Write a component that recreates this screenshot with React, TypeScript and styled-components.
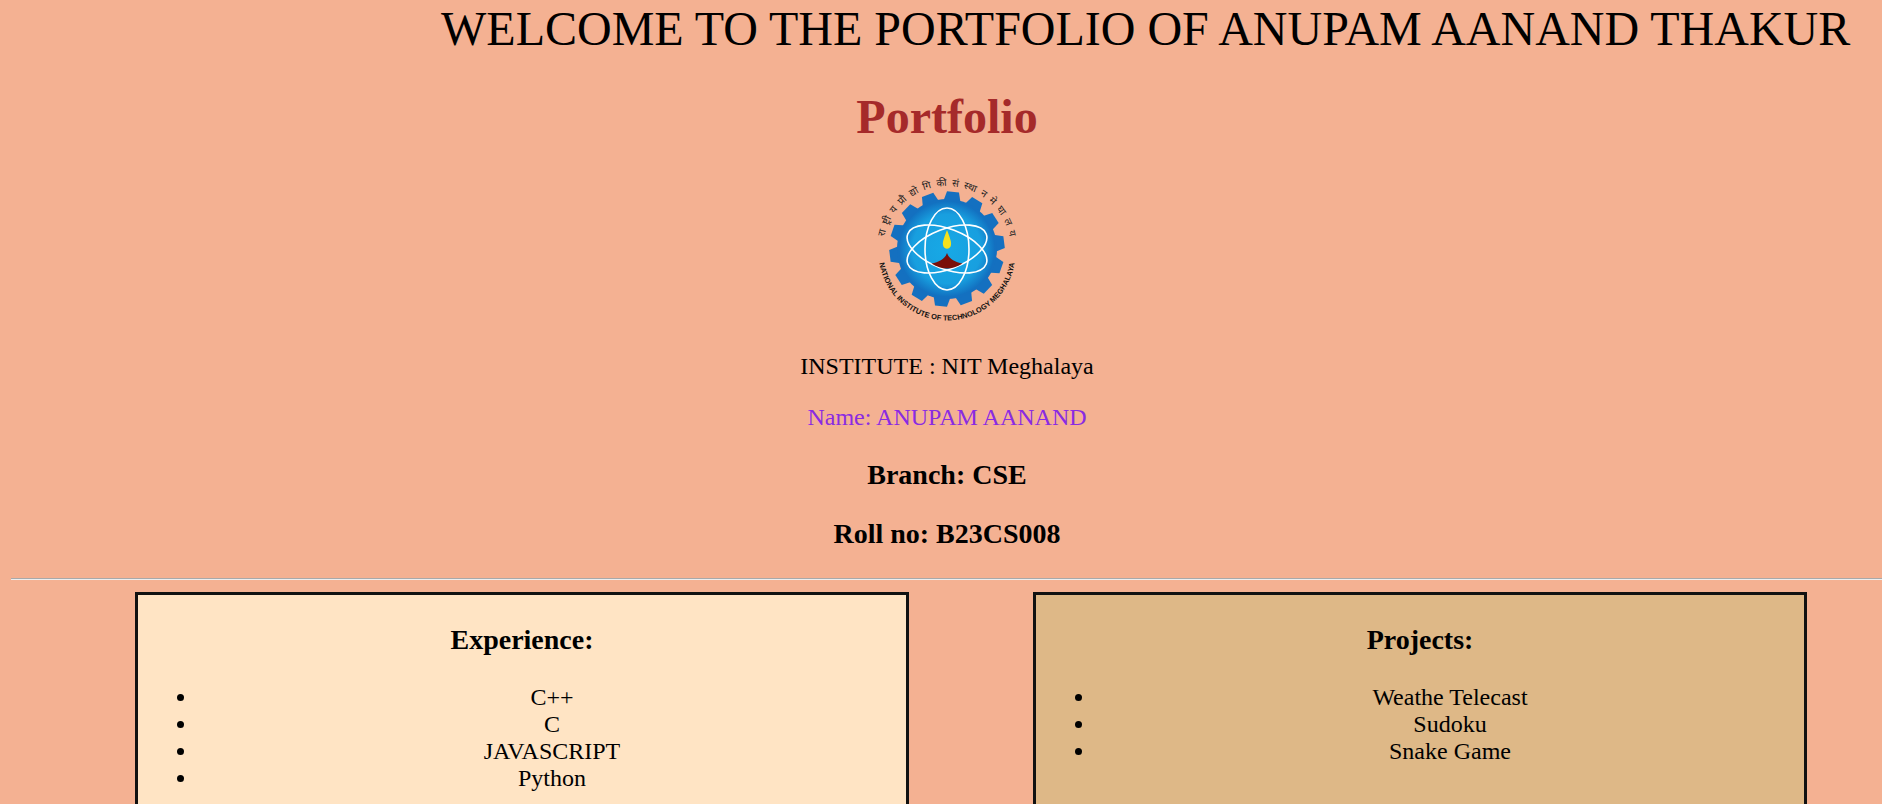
import React from "react";
import styled, { createGlobalStyle } from "styled-components";

const Global = createGlobalStyle`
  html { overflow: hidden; height: 100%; background: #f4b192; }
  body {
    margin: 0 0 0 11px;
    width: 1872px;
    font-family: "Liberation Serif", "Times New Roman", serif;
    font-size: 24px;
    color: #000;
  }
`;

const Marquee = styled.div`
  font-size: 48px;
  line-height: 55px;
  white-space: nowrap;
  padding-left: 430px;
  padding-top: 1px;
`;

const Centered = styled.section`
  text-align: center;
`;

const PageTitle = styled.h1`
  font-size: 48px;
  line-height: 55px;
  font-weight: 700;
  color: #a52a2a;
  margin: 33px 0 0;
`;

const LogoWrap = styled.div`
  display: flex;
  justify-content: center;
  margin-top: 30px;
`;

const Line = styled.p<{ $color?: string }>`
  font-size: 24px;
  line-height: 27px;
  margin: 24px 0 0;
  color: ${(p) => p.$color || "#000"};

  &:first-of-type {
    margin-top: 29px;
  }
`;

const Sub = styled.h3`
  font-size: 28px;
  line-height: 32px;
  font-weight: 700;
  margin: 27.5px 0 0;
`;

const Rule = styled.hr`
  border: 0;
  border-top: 1px solid #a9a9a9;
  border-bottom: 1px solid #eeeeee;
  margin: 28px 0 0;
`;

const Cards = styled.div`
  display: flex;
  gap: 124px;
  padding-left: 124px;
  margin-top: 12px;
`;

const Card = styled.article<{ $bg: string }>`
  width: 774px;
  height: 400px;
  box-sizing: border-box;
  background: ${(p) => p.$bg};
  border: 3px solid #111;
  text-align: center;
  padding-top: 29px;
`;

const CardTitle = styled.h3`
  font-size: 28px;
  line-height: 32px;
  font-weight: 700;
  margin: 0;
`;

const List = styled.ul`
  margin: 28px 0 0;
  padding: 0 0 0 60px;
  font-size: 24px;
  line-height: 27px;
`;

function Logo() {
  const teeth = Array.from({ length: 14 }, (_, i) => (i * 360) / 14);
  return (
    <svg width="150" height="150" viewBox="0 0 150 150" aria-label="NIT Meghalaya logo">
      <defs>
        <radialGradient id="disc" cx="50%" cy="50%" r="50%">
          <stop offset="0%" stopColor="#17a9e6" />
          <stop offset="72%" stopColor="#189fdf" />
          <stop offset="100%" stopColor="#1270c0" />
        </radialGradient>
        <path id="topArc" d="M 13 92 A 64 64 0 1 1 137 92" />
        <path id="bottomArc" d="M 6.5 78 A 68.5 68.5 0 0 0 143.5 78" />
      </defs>
      {teeth.map((a) => (
        <path key={a} d="M69 17.5 L81 17.5 L84 29 L66 29 Z" fill="#1470c0" transform={`rotate(${a + 6} 75 75)`} />
      ))}
      <circle cx="75" cy="75" r="50" fill="#1470c0" />
      <circle cx="75" cy="75" r="48" fill="url(#disc)" />
      <g fill="none" stroke="#fff" strokeWidth="1.6">
        <ellipse cx="75" cy="75" rx="42" ry="20" transform="rotate(21 75 75)" />
        <ellipse cx="75" cy="75" rx="42" ry="20" transform="rotate(-21 75 75)" />
        <ellipse cx="75" cy="75" rx="41" ry="22" transform="rotate(90 75 75)" />
      </g>
      <path d="M75 56 C78 64 79.6 68 79 71 C78.2 76 71.8 76 71 71 C70.4 68 72 64 75 56Z" fill="#f4e11c" />
      <path d="M75 79 C77 85 83 88 90.5 89.5 C85 93 80 94.5 75 94.5 C70 94.5 65 93 59.5 89.5 C67 88 73 85 75 79Z" fill="#7a0f08" />
      <text fontFamily="'Noto Sans', 'Liberation Sans', sans-serif" fontSize="10" fill="#222" wordSpacing="2.4">
        <textPath href="#topArc" startOffset="50%" textAnchor="middle">
          रा ष्ट्री य प्रौ द्यो गि की  सं स्था न मे घा ल य
        </textPath>
      </text>
      <text fontFamily="'Liberation Sans', sans-serif" fontSize="7.4" fontWeight="700" fill="#111">
        <textPath href="#bottomArc" startOffset="50%" textAnchor="middle">
          NATIONAL INSTITUTE OF TECHNOLOGY MEGHALAYA
        </textPath>
      </text>
    </svg>
  );
}

export default function App() {
  return (
    <>
      <Global />
      <Marquee>WELCOME TO THE PORTFOLIO OF ANUPAM AANAND THAKUR</Marquee>
      <Centered>
        <PageTitle>Portfolio</PageTitle>
        <LogoWrap>
          <Logo />
        </LogoWrap>
        <Line>INSTITUTE : NIT Meghalaya</Line>
        <Line $color="#8a2be2">Name: ANUPAM AANAND</Line>
        <Sub>Branch: CSE</Sub>
        <Sub>Roll no: B23CS008</Sub>
      </Centered>
      <Rule />
      <Cards>
        <Card $bg="#ffe4c4">
          <CardTitle>Experience:</CardTitle>
          <List>
            <li>C++</li>
            <li>C</li>
            <li>JAVASCRIPT</li>
            <li>Python</li>
          </List>
        </Card>
        <Card $bg="#deb887">
          <CardTitle>Projects:</CardTitle>
          <List>
            <li>Weathe Telecast</li>
            <li>Sudoku</li>
            <li>Snake Game</li>
          </List>
        </Card>
      </Cards>
    </>
  );
}
